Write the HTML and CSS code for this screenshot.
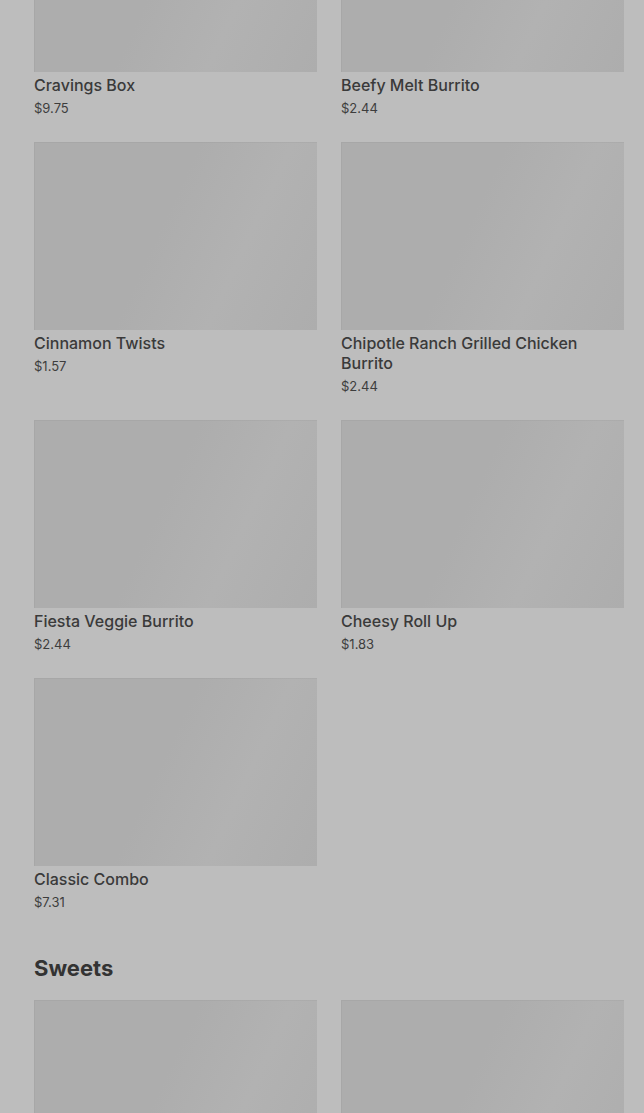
FILE: index.html
```html
<!DOCTYPE html>
<html lang="en">
<head>
  <meta charset="UTF-8">
  <title>Menu</title>
  <link rel="stylesheet" href="styles.css">
</head>
<body>
  <div class="menu">
    <!-- Combos -->
    <section class="category">
      <div class="grid">
        <div class="item">
          <div class="thumb"></div>
          <div class="name">Cravings Box</div>
          <div class="price">$9.75</div>
        </div>
        <div class="item">
          <div class="thumb"></div>
          <div class="name">Beefy Melt Burrito</div>
          <div class="price">$2.44</div>
        </div>
        <div class="item">
          <div class="thumb"></div>
          <div class="name">Cinnamon Twists</div>
          <div class="price">$1.57</div>
        </div>
        <div class="item">
          <div class="thumb"></div>
          <div class="name">Chipotle Ranch Grilled Chicken Burrito</div>
          <div class="price">$2.44</div>
        </div>
        <div class="item">
          <div class="thumb"></div>
          <div class="name">Fiesta Veggie Burrito</div>
          <div class="price">$2.44</div>
        </div>
        <div class="item">
          <div class="thumb"></div>
          <div class="name">Cheesy Roll Up</div>
          <div class="price">$1.83</div>
        </div>
        <div class="item">
          <div class="thumb"></div>
          <div class="name">Classic Combo</div>
          <div class="price">$7.31</div>
        </div>
      </div>
    </section>

    <!-- Sweets -->
    <section class="category">
      <h2>Sweets</h2>
      <div class="grid">
        <div class="item">
          <div class="thumb"></div>
        </div>
        <div class="item">
          <div class="thumb"></div>
        </div>
      </div>
    </section>
  </div>
</body>
</html>
```

FILE: styles.css
```css
body {
  font-family: Inter, "Liberation Sans", sans-serif;
  background-color: #bdbdbd;
  color: #363636;
  margin: 0;
  padding: 0;
  overflow: hidden;
}

.menu {
  margin-top: -116px;
  padding: 0 20px 0 34px;
}

.category h2 {
  font-size: 22px;
  line-height: 32px;
  font-weight: 700;
  margin: 40px 0 16px;
  color: #333;
}

.grid {
  display: grid;
  grid-template-columns: 1fr 1fr;
  column-gap: 24px;
  row-gap: 24px;
}

.thumb {
  height: 188px;
  background: linear-gradient(115deg, #adadad 0%, #adadad 45%, #b2b2b2 70%, #adadad 100%);
  box-shadow: inset 1px 1px 0 rgba(0, 0, 0, 0.03);
  margin-bottom: 3px;
}

.name {
  font-size: 16px;
  line-height: 20px;
  font-weight: 500;
  color: #3a3a3a;
}

.price {
  font-size: 13px;
  line-height: 20px;
  margin-top: 3px;
  color: #3d3d3d;
}
```
